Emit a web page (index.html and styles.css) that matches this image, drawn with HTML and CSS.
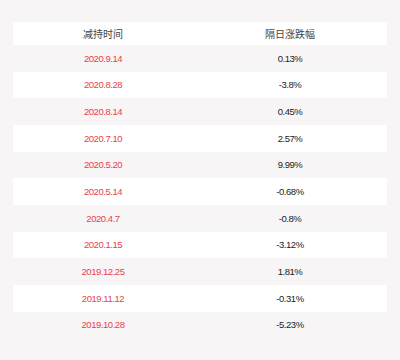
FILE: index.html
```html
<!DOCTYPE html>
<html lang="zh">
<head>
<meta charset="utf-8">
<link rel="stylesheet" href="styles.css">
</head>
<body>
<div class="page">
  <div class="table">
    <div class="row head"><div class="c1">减持时间</div><div class="c2">隔日涨跌幅</div></div>
    <div class="row alt"><div class="c1 date">2020.9.14</div><div class="c2">0.13%</div></div>
    <div class="row"><div class="c1 date">2020.8.28</div><div class="c2">-3.8%</div></div>
    <div class="row alt"><div class="c1 date">2020.8.14</div><div class="c2">0.45%</div></div>
    <div class="row"><div class="c1 date">2020.7.10</div><div class="c2">2.57%</div></div>
    <div class="row alt"><div class="c1 date">2020.5.20</div><div class="c2">9.99%</div></div>
    <div class="row"><div class="c1 date">2020.5.14</div><div class="c2">-0.68%</div></div>
    <div class="row alt"><div class="c1 date">2020.4.7</div><div class="c2">-0.8%</div></div>
    <div class="row"><div class="c1 date">2020.1.15</div><div class="c2">-3.12%</div></div>
    <div class="row alt"><div class="c1 date">2019.12.25</div><div class="c2">1.81%</div></div>
    <div class="row"><div class="c1 date">2019.11.12</div><div class="c2">-0.31%</div></div>
    <div class="row alt"><div class="c1 date">2019.10.28</div><div class="c2">-5.23%</div></div>
  </div>
</div>
</body>
</html>
```
FILE: styles.css
```css
html, body {
  margin: 0;
  padding: 0;
  background: #f8f5f6;
}
.page {
  width: 400px;
  height: 360px;
  padding: 22px 13px 0;
  box-sizing: border-box;
  font-family: "Liberation Sans", Arial, "Noto Sans CJK SC", sans-serif;
}
.table {
  display: flex;
  flex-direction: column;
}
.row {
  display: grid;
  grid-template-columns: 180px 194px;
  height: 26.667px;
  align-items: center;
  text-align: center;
  background: #ffffff;
  font-size: 9.5px;
  letter-spacing: -0.45px;
  color: #222222;
}
.row.alt {
  background: #f8f5f6;
}
.row.head {
  height: 23px;
  font-size: 10px;
  letter-spacing: 0;
  color: #444444;
}
.date {
  color: #e8424c;
}
```
